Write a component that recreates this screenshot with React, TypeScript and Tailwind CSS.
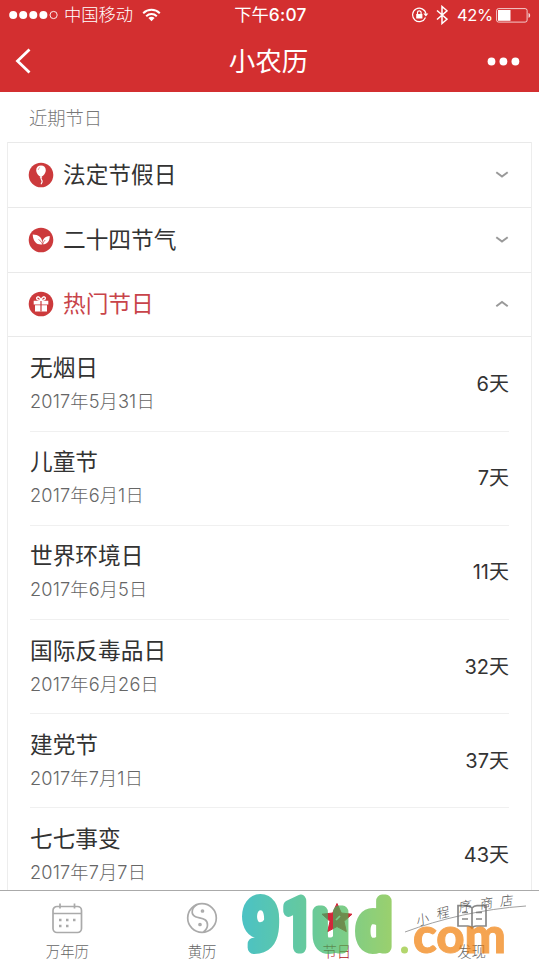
import React from "react";

const days = [
  ["无烟日", "2017年5月31日", "6天"],
  ["儿童节", "2017年6月1日", "7天"],
  ["世界环境日", "2017年6月5日", "11天"],
  ["国际反毒品日", "2017年6月26日", "32天"],
  ["建党节", "2017年7月1日", "37天"],
  ["七七事变", "2017年7月7日", "43天"],
];

function Chevron({ up = false }: { up?: boolean }) {
  return (
    <svg width="14" height="8" viewBox="0 0 14 8" fill="none" stroke="#999" strokeWidth="2">
      <path d={up ? "M1.3 6.300 7 2l5.700 4.300" : "M1.3 1.300 7 5.600l5.700-4.300"} />
    </svg>
  );
}

function Balloon() {
  return (
    <svg width="26" height="26" viewBox="0 0 26 26">
      <circle cx="13" cy="13" r="12.3" fill="#cc3a3c" />
      <path d="M13 3.500c-3 0-4.800 2.100-4.800 4.700 0 2.900 2.400 5.600 4.200 6.300l-.7 1.300h2.600l-.7-1.300c1.900-.7 4.200-3.400 4.200-6.300 0-2.600-1.800-4.700-4.800-4.700z" fill="#fff" />
      <path d="M13 15.500c-.5 2 1.600 2.600 1.100 4.300-.2 1-.8 1.200-.8 2.400" fill="none" stroke="#fff" strokeWidth="1.200" />
      <path d="M10.300 8c0-1.300.7-2.200 1.800-2.500" fill="none" stroke="#e58a8a" strokeWidth=".8" />
    </svg>
  );
}

function Leaf() {
  return (
    <svg width="26" height="26" viewBox="0 0 26 26">
      <circle cx="13" cy="13" r="12.3" fill="#cc3a3c" />
      <path d="M4.700 7.500c5.500.2 10 2.500 9.800 9.800-5 1-9.300-2-9.800-9.800z" fill="#fff" />
      <path d="M14.700 17.300c-1-4.800 2-8 7-8.300.2 5-2.500 8.300-7 8.300z" fill="#fff" />
      <path d="M10.500 12.500c2 1.300 3.200 2.700 4.100 4.800.5-1.900 1.300-3 2.600-4.300" fill="none" stroke="#cc3a3c" strokeWidth=".7" />
    </svg>
  );
}

function Gift() {
  return (
    <svg width="26" height="26" viewBox="0 0 26 26">
      <circle cx="13" cy="13" r="12.3" fill="#cc3a3c" />
      <path d="M5.700 9.700h14.600v3.700H5.700zM7 14.200h12v6.300H7z" fill="#fff" />
      <path d="M13 9.500C9 9.500 8.300 8 8.800 6.600c.8-1.700 3.400-.6 4.200 2.900.8-3.500 3.400-4.600 4.200-2.900.5 1.400-.2 2.900-4.200 2.900z" fill="none" stroke="#fff" strokeWidth="1.400" />
      <path d="M13 10v10.500" stroke="#cc3a3c" strokeWidth="1.200" />
    </svg>
  );
}

function Status() {
  return (
    <div className="grid h-[30px] grid-cols-[1fr_auto_1fr] items-center text-[17.300px] leading-[30px]">
      <div className="flex items-center pl-[9px]">
        <svg width="50" height="10" viewBox="0 0 50 10" fill="#fff">
          <circle cx="4.200" cy="5" r="4" />
          <circle cx="14.200" cy="5" r="4" />
          <circle cx="24.300" cy="5" r="4" />
          <circle cx="34.400" cy="5" r="4" />
          <circle cx="44.600" cy="5" r="3.600" fill="none" stroke="#fff" strokeWidth=".9" />
        </svg>
        <span className="ml-[5px] font-light">中国移动</span>
        <svg className="ml-[9px]" width="19" height="14" viewBox="0 0 19 14" fill="none" stroke="#fff" strokeWidth="2">
          <path d="M1.200 5.200c4.600-4.500 12-4.500 16.600 0M4.200 8.200c3-2.900 7.600-2.900 10.600 0" />
          <path d="M9.500 13.200 6.400 10c1.700-1.600 4.500-1.600 6.200 0z" fill="#fff" stroke="none" />
        </svg>
      </div>
      <span className="ml-[2px]">下午<span className="font-medium tracking-[0.3px]">6:07</span></span>
      <div className="flex items-center justify-end pr-[8px]">
        <svg width="18" height="16" viewBox="0 0 18 16" fill="none" stroke="#fff" strokeWidth="1.200">
          <path d="M14.500 10.500a6.700 6.700 0 1 1 .4-3.800" />
          <path d="m12.300 6.600 2.600 3 2.400-3z" fill="#fff" stroke="none" />
          <path d="M5.200 7h6.200v4.500H5.200z" fill="#fff" stroke="none" />
          <path d="M6.500 7.200V5.600a1.800 1.800 0 0 1 3.600 0v1.600" />
        </svg>
        <svg className="ml-[7px]" width="12" height="20" viewBox="0 0 12 20" fill="none" stroke="#fff" strokeWidth="1.500">
          <path d="m1 5.500 10 8.700L6 18.500v-17l5 4.300-10 8.700" />
        </svg>
        <span className="ml-[9px] w-[36px] text-[16.500px] tracking-[-0.300px]">42%</span>
        <svg className="ml-[3px]" width="35" height="15" viewBox="0 0 35 15">
          <rect x=".6" y=".6" width="30.500" height="13.500" rx="2" fill="none" stroke="#fff" strokeOpacity=".75" strokeWidth="1" />
          <path d="M2 2h12.500v10.800H2z" fill="#fff" />
          <path d="M32.500 5c2.200.5 2.200 4.300 0 4.800z" fill="#fff" fillOpacity=".8" />
        </svg>
      </div>
    </div>
  );
}

function Section({ icon, label, open = false }: { icon: React.ReactNode; label: string; open?: boolean }) {
  return (
    <div className="flex h-[64.800px] items-center border-t border-[#e9e9e9] pl-[20px] pr-[22px]">
      {icon}
      <span className={open ? "ml-[9px] grow text-[22.700px] text-[#c8444a]" : "ml-[9px] grow text-[22.700px] text-[#333]"}>{label}</span>
      <Chevron up={open} />
    </div>
  );
}

function Tab({ children, label, active = false }: { children: React.ReactNode; label: string; active?: boolean }) {
  return (
    <div className="flex flex-1 flex-col items-center pt-[9px]">
      <svg className="shrink-0" width="36" height="36" viewBox="0 0 36 36" fill="none" stroke="#aaa" strokeWidth="1.700">
        {children}
      </svg>
      <span className={active ? "mt-[8px] shrink-0 text-[14.400px] font-light leading-[16px] text-[#b01824]" : "mt-[8px] shrink-0 text-[14.400px] font-light leading-[16px] text-[#666]"}>{label}</span>
    </div>
  );
}

function Watermark() {
  return (
    <svg className="absolute left-[236px] top-0 h-[70px] w-[303px] overflow-visible" viewBox="236 890 303 70">
      <defs>
        <linearGradient id="brand" gradientUnits="userSpaceOnUse" x1="242" y1="0" x2="392" y2="0">
          <stop offset="0" stopColor="#00a9ac" />
          <stop offset=".5" stopColor="#2db56b" />
          <stop offset="1" stopColor="#71bd31" />
        </linearGradient>
      </defs>
      <g opacity=".7">
        <g fill="url(#brand)" stroke="url(#brand)" strokeWidth="13" strokeLinejoin="round" fontFamily="Roboto, sans-serif" fontWeight="300">
          <text x="245" y="946" fontSize="64" textLength="32" lengthAdjust="spacingAndGlyphs">9</text>
          <text x="284" y="946" fontSize="64" textLength="28" lengthAdjust="spacingAndGlyphs">1</text>
          <text x="314" y="946" fontSize="66" textLength="33" lengthAdjust="spacingAndGlyphs">u</text>
          <text x="358" y="946" fontSize="62" textLength="32" lengthAdjust="spacingAndGlyphs">d</text>
        </g>
        <circle cx="404.500" cy="949" r="3.500" fill="#93c52f" />
        <text x="413" y="952" fontFamily="Lato, sans-serif" fontWeight="900" fontSize="49" textLength="93" lengthAdjust="spacingAndGlyphs" fill="#f17e08" stroke="#f17e08" strokeWidth="1">com</text>
      </g>
      <path d="M405 931c35-13 77-23 121-26" fill="none" stroke="#777" strokeWidth=".7" />
      <g fontFamily="'Noto Sans CJK SC', sans-serif" fontWeight="300" fontSize="13" fill="#555">
        <text transform="translate(417 925) rotate(-16) skewX(-10)">小</text>
        <text transform="translate(437 918) rotate(-13) skewX(-10)">程</text>
        <text transform="translate(459 911) rotate(-10) skewX(-10)">序</text>
        <text transform="translate(480 908) rotate(-8) skewX(-10)">商</text>
        <text transform="translate(500 905) rotate(-5) skewX(-10)">店</text>
      </g>
    </svg>
  );
}

export default function App() {
  return (
    <div className="flex h-[960px] w-[539px] flex-col overflow-hidden bg-white font-['Inter','Noto_Sans_CJK_SC',sans-serif]">
      <header className="h-[92px] shrink-0 bg-[#d32f30] text-white">
        <Status />
        <div className="grid h-[62px] grid-cols-[1fr_auto_1fr] items-center">
          <svg className="ml-[15px]" width="17" height="26" viewBox="0 0 17 26" fill="none" stroke="#fff" strokeWidth="2.800">
            <path d="M14.500 1.500 2.500 13l12 11.500" />
          </svg>
          <h1 className="mr-[2px] text-[26.500px] leading-[60px]">小农历</h1>
          <svg className="mr-[19px] justify-self-end" width="33" height="9" viewBox="0 0 33 9" fill="#fff">
            <circle cx="4.500" cy="4.500" r="3.900" />
            <circle cx="16.400" cy="4.500" r="3.900" />
            <circle cx="28.400" cy="4.500" r="3.900" />
          </svg>
        </div>
      </header>
      <main className="flex min-h-0 flex-1 flex-col overflow-hidden px-[7px]">
        <h2 className="h-[50px] shrink-0 pl-[22px] text-[18.300px] font-light leading-[52px] text-[#777]">近期节日</h2>
        <div className="shrink-0 border-x border-[#ededed]">
          <Section icon={<Balloon />} label="法定节假日" />
          <Section icon={<Leaf />} label="二十四节气" />
          <Section icon={<Gift />} label="热门节日" open />
          <div className="border-t border-[#e9e9e9] pl-[22px] pr-[22px]">
            {days.map(([name, date, left]) => (
              <div key={name} className="flex h-[94.200px] items-center justify-between border-b border-[#f0f0f0]">
                <div>
                  <div className="text-[22.700px] leading-[34px] text-[#333]">{name}</div>
                  <div className="text-[18.200px] font-light leading-[32px] tracking-[0.150px] text-[#666]">{date}</div>
                </div>
                <div className="text-[20px] text-[#333]">{left}</div>
              </div>
            ))}
          </div>
        </div>
      </main>
      <nav className="relative flex h-[70px] shrink-0 border-t border-[#aaa] bg-white">
        <Tab label="万年历">
          <rect x="4" y="6.500" width="28.500" height="26" rx="4" />
          <path d="M4 13.500h28.500M11 3.500v5M25.500 3.500v5" />
          <path d="M10 20h2.500M17 20h2.500M24 20h2.500M10 26h2.500M17 26h2.500" strokeWidth="2.500" />
        </Tab>
        <Tab label="黄历">
          <circle cx="18" cy="18" r="14.300" />
          <path d="M13 4.700c-5 2.300-7 9.500-1.500 12 4.500 2 12 1 12 8.300 0 3-1.500 5-4 7" />
          <circle cx="18.500" cy="11" r="1" />
          <circle cx="16" cy="24.500" r="1" />
        </Tab>
        <Tab label="节日" active>
          <path d="m18 3.500 4.300 9.500L33 14.200l-8 7.100 2.300 10.300L18 26.500l-9.300 5.100L11 21.300l-8-7.100 10.700-1.200z" fill="#d2283a" stroke="#d2283a" strokeWidth="1" strokeLinejoin="round" />
          <path d="m17 20 4-4" stroke="#fff" />
        </Tab>
        <Tab label="发现">
          <path d="M18 8v20M18 8c-1.500-1.700-3-2.300-5-2.300H4V26h10c2 0 3 .7 4 2 1-1.300 2-2 4-2h10V5.700h-9c-2 0-3.500.6-5 2.300zM8 12.500h6M8 19h6M22 12.500h6M22 19h6" stroke="#888" />
        </Tab>
        <Watermark />
      </nav>
    </div>
  );
}
